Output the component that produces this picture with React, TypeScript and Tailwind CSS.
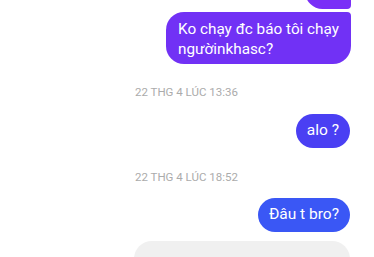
import React from 'react';

const Stamp = ({ text }: { text: string }) => (
  <div className="pl-[135px] text-[11.5px] leading-[14px] text-[#ababab]">{text}</div>
);

const App = () => {
  return (
    <div className="w-[374px] h-[257px] overflow-hidden bg-white font-['Roboto',sans-serif]">
      <div className="flex flex-col items-end pr-[23px] mt-[-26px]">
        {/* tail of the previous message, cut off at the top */}
        <div className="w-[46px] h-[35px] bg-[#7a2ff7] rounded-[18px] rounded-br-[4px]" />
        <div className="mt-[3px] bg-[#7131f5] text-white text-[15.3px] leading-[20px] px-[12px] pt-[7px] pb-[5px] rounded-[18px] rounded-tr-[4px]">
          Ko chạy đc báo tôi chạy
          <br />
          ngườinkhasc?
        </div>
      </div>

      <div className="mt-[21px]">
        <Stamp text="22 THG 4 LÚC 13:36" />
      </div>
      <div className="flex justify-end pr-[24px] mt-[15px]">
        <div className="h-[34px] px-[11px] flex items-center bg-[#4a3ff3] text-white text-[15.5px] rounded-full">alo ?</div>
      </div>

      <div className="mt-[22px]">
        <Stamp text="22 THG 4 LÚC 18:52" />
      </div>
      <div className="flex justify-end pr-[24px] mt-[14px]">
        <div className="h-[34px] px-[11px] flex items-center bg-[#3a57f5] text-white text-[15.5px] rounded-full">Đâu t bro?</div>
      </div>

      <div className="flex justify-end pr-[24px] mt-[9px]">
        <div className="w-[216px] h-[40px] bg-[#f0f0f0] rounded-[18px]" />
      </div>
    </div>
  );
};

export default App;
